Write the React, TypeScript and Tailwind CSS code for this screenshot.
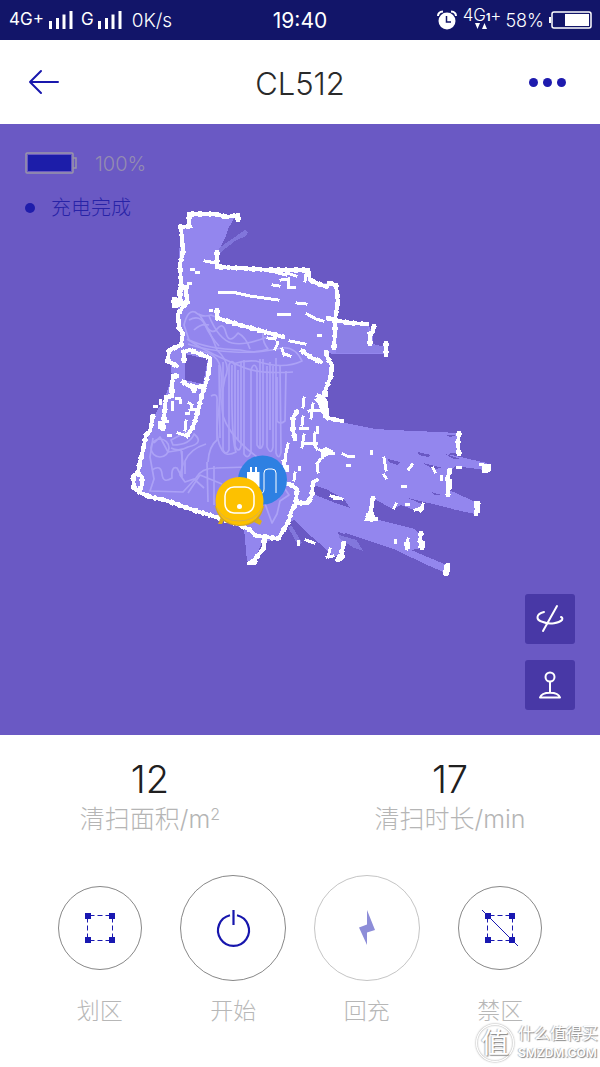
import type { ReactNode } from "react";

const walls = [
  // upper room
  "M238 220V215L227 217L215 214H189V224L190 226L181 227L183 252L180 264L181 286L179 302",
  "M187 287L180 289V300L174 299V306L183 304L187 302L186 289",
  "M185 304L178 314L179 328L183 333L181 345L169 350L168 361L177 366",
  "M217 252V267L240 268L270 270L308 270L310 280L319 284L327 287",
  "M217 310V318L240 325L262 331L283 337",
  "M329 283L336 285L338 302L335 320L335 332L334 348",
  "M328 318L340 321L350 323L367 324",
  "M374 326L373 332L370 334L370 344",
  "M386 343V355",
  "M302 351L312 358L321 362",
  // right side
  "M326 352L328 359L332 365L331 376L325 391L325 395L317 400L323 406L326 409L328 418L342 421",
  "M318 396L326 402L325 416",
  "M297 411L293 418L293 430L295 439",
  "M284 483L290 484L297 489L296 503L308 503L312 495L313 482L317 480",
  // lower outline
  "M177 376L173 376L172 385V396L166 397L165 408L164 418L163 429",
  "M153 416L150 431L146 435L143 450L139 466L138 473L133 476L134 488L139 492L150 497L165 500L190 509L216 517L240 525L250 530L256 536L267 537L278 539L283 531L289 521L291 512L296 503",
  "M137 473L142 477V485L139 491",
  "M264 540L264 548L259 554L254 561",
  // pillar
  "M184 361V352L190 350L197 353L210 358L209 370L206 383L202 394L198 411L193 427L187 436",
  "M183 382L189 386L204 387M194 388V391",
  // far right ends
  "M459 433L458 443L459 454",
  "M450 470L447 480L449 484L448 495",
  "M478 503L476 514",
  "M448 565L446 574",
  "M421 533L420 541L422 548",
  "M373 498L371 510L367 519L376 519",
  "M344 543L342 551L343 557L337 560",
];

const debris = [
  "M205 261L216 263M219 292L232 292L250 296L278 300M307 314L316 319L323 321M290 341L305 344",
  "M309 411L320 410L325 414M320 450L328 453L333 453M322 457V452",
  "M275 272L286 275L289 271M281 280L288 279L288 287M273 285L279 286M290 274L296 276M289 287H294M306 274L305 281",
  "M297 303L306 304M278 314L289 314M318 335H320",
  "M191 269H193M196 272H198M188 283H190",
  "M210 310H211M268 338L275 339M275 349L277 345V342M282 349L284 355M285 354L290 356",
  "M160 400V403M154 406H156M159 422V427M170 388V390M172 402V409M180 400V402M176 398H179",
  "M189 403L192 405L191 409M190 410L197 409M186 413H188M186 421L185 430M178 433L184 435M166 421H167M168 435H170",
  "M304 398L303 407M303 417L302 425M300 428L307 428M317 427L317 432M315 433L314 444L317 449M304 435L302 447M304 443H316M313 404L311 418",
  "M288 444L286 453L285 462M283 461L285 468M286 483L291 486M295 473L294 480M320 460L317 464L318 472M299 467V469",
  "M343 454L347 456L353 456M371 451V453M347 465H349",
  "M331 496L342 499M334 498H340M384 458L386 470M384 475L386 478M402 486H405M409 469L412 465",
  "M433 468L435 472M441 476V479M457 467H460M480 464H482",
  "M396 504L394 508M406 504H408M415 510L422 508L423 504M395 540V542M408 539L407 549",
  "M298 541V544M306 540L314 543M330 549L328 557M327 557L333 556",
];

const track = [
  "M184 325Q188 309 195 312Q202 318 211 315Q224 321 244 326T263 332Q262 342 268 349Q256 354 240 350Q208 349 189 340Z",
  "M189 320Q200 314 205 325T219 346M187 339Q200 348 215 355T245 368T293 372",
  "M199 314Q210 330 217 350Q232 364 225 378Q220 398 223 416Q228 432 247 449L257 457",
  "M204 323Q212 336 217 329Q223 321 226 333T238 333Q246 337 250 349",
  "M188 344C213 353 254 355 281 348Q295 346 302 361Q283 370 256 361Q244 360 233 364",
  "M194 330Q201 323 209 325M209 316Q219 340 232 343T267 337",
  "M194 351Q220 351 221 372C224 398 211 430 221 448Q225 458 236 452Q231 440 232 365",
  "M211 396Q218 392 217 402V440Q209 446 208 462",
  "M223 362V450Q226 456 229 450V365Q232 358 235 365V446Q239 454 241 446V362",
  "M244 360V454Q248 460 251 452V370Q254 361 257 369V445Q261 452 263 444V359",
  "M267 366V447Q271 456 273 447V366M276 358V453Q279 461 281 452L280 365",
  "M286 371L285 421Q280 425 277 421V377M219 365L220 438M238 370V440M260 359V449M270 362V430",
  "M153 438L150 457L154 479L150 491L183 492L196 478Q201 468 216 468L248 467",
  "M154 443L160 437L168 452L181 450L183 464L180 475L185 482L194 479L204 488",
  "M152 470Q161 464 162 474T172 478Q171 466 177 468L182 477V451",
  "M171 448Q179 452 188 447Q205 443 194 434Q190 445 173 445L171 440L190 430",
  "M151 448a9 9 0 1 0 18 0a9 9 0 0 0-18 0",
  "M188 493L200 475L222 484M207 462L208 502M214 466V505M206 444Q190 449 185 461V474",
  "M264 501L272 523L277 514L280 501L289 495L285 489L276 493L268 491",
];

function SignalBars() {
  return (
    <svg viewBox="0 0 24 18" className="h-[18px] w-6" fill="white" aria-hidden="true">
      <path d="M0 10h3v8H0zM7 7h3v11H7zM13.500 3.500h3V18h-3zM20.500 0h3v18h-3z" />
    </svg>
  );
}

function StatusBar() {
  return (
    <div className="relative flex h-10 items-center justify-between bg-[#121569] pl-[9px] pr-2 text-white">
      <div className="flex items-center">
        <span className="w-10 text-[17px]">4G+</span>
        <SignalBars />
        <span className="ml-2 mr-1 text-[17px]">G</span>
        <SignalBars />
        <span className="ml-2.5 pt-0.5 text-[19px] font-light">0K/s</span>
      </div>
      <span className="absolute left-1/2 -translate-x-1/2 pt-0.5 text-[21px]">19:40</span>
      <div className="flex items-center">
        <svg viewBox="0 0 20 20" className="mr-1.5 size-5" aria-hidden="true">
          <circle cx="10" cy="11" r="8.500" fill="white" />
          <path d="M1 6Q1 2 6 1.500M14 1.500Q19 2 19 6" fill="none" stroke="white" strokeWidth="2" />
          <path d="M9.500 6v6H14" fill="none" stroke="#121569" strokeWidth="1.500" />
        </svg>
        <span className="relative -top-1 mr-1 flex items-start text-[17px] font-light">
          4G<span className="pt-2 text-[10px] font-bold leading-3">1</span>+
          <svg viewBox="0 0 12 6" className="absolute left-3 top-5 h-1.5 w-3" fill="white" aria-hidden="true">
            <path d="M0 0h5L2.500 6zM7 6h5L9.500 0z" />
          </svg>
        </span>
        <span className="pt-0.5 text-lg font-light">58%</span>
        <svg viewBox="0 0 44 18" className="ml-1 h-[18px] w-11" aria-hidden="true">
          <rect x="4" y="1" width="39" height="16" rx="2" fill="none" stroke="white" strokeWidth="1.500" />
          <path d="M1 6h2v6H1z" fill="white" />
          <path d="M17 3h24v12H17z" fill="white" />
        </svg>
      </div>
    </div>
  );
}

function CleaningMap() {
  return (
    <svg viewBox="0 124 600 611" className="block w-full" role="img" aria-label="清扫地图">
      <g shapeRendering="crispEdges">
        <path
          fill="#9386ee"
          d="M189 215H236L228 229L226 236L220 248L217 266L308 270L310 281L337 285V323L368 325L373 333V344L386 347V354H335L327 353L332 368L325 393L328 419L350 424L376 429L391 430L416 431L458 433L459 452L447 454L487 463L485 470L455 466L450 471L449 490L478 503L475 514L452 509L449 508L408 498L424 505L420 512L401 505L393 509L374 499L371 518L415 529L420 535L422 548L411 550L449 566L446 573L427 565L396 550L363 539L345 533L343 557L333 556L319 543L304 530L295 520L288 522L278 539L262 542L254 562L247 561L244 529L216 518L142 494L133 485L140 466L153 418L165 397L172 377L169 350L181 345L178 315L180 227L190 225Z"
        />
        <path d="M219 248L245 230L248 232L246 236L235 241L221 252L217 257Z" fill="#8176db" />
        <path d="M340 533L356 539L363 551L354 548L339 538M292 526L302 543L298 545L288 527" fill="#8277dc" />
        <path d="M338 325H367L372 344L384 347V353H336Z" fill="#8b7fe5" />
        <path
          fill="#6a59c4"
          d="M185 354L208 359L203 384L185 380ZM313 485L326 489L344 499L350 508L333 502L313 494ZM338 532L353 537L374 545L339 535ZM418 452L431 455L428 457L419 455ZM443 453L460 459L454 459ZM388 459L400 462L397 465L389 462ZM423 463L443 468L433 469ZM431 492L442 495L435 495ZM446 435H456L450 437Z"
        />
      </g>
      <g fill="none" stroke="#aca2f6" strokeWidth="1.700" strokeLinejoin="round">
        {track.map((d) => (
          <path key={d} d={d} />
        ))}
      </g>
      <g fill="none" stroke="white" strokeLinecap="square" shapeRendering="crispEdges">
        {walls.map((d) => (
          <path key={d} d={d} strokeWidth="3.800" />
        ))}
        {/* ragged scan edge along the walls */}
        {walls.map((d) => (
          <path key={d} d={d} strokeWidth="5.400" strokeLinecap="butt" strokeDasharray="3 5 2 7 4 4" />
        ))}
        {debris.map((d) => (
          <path key={d} d={d} strokeWidth="3" />
        ))}
      </g>
      <path
        d="M160 422l4-3 2 10-6 1zM320 450l6-3 8 4-7 5-5 3zM247 562l7-4 4 3-2 4h-9zM284 465h5v7h-4zM317 400l3-6 6 4v12h-6zM482 464h9v7l-4 2h-5zM416 509l6-4 2 4-4 4zM444 565h6v6l-4 4h-3zM474 501h6v12l-5 1zM446 479h6v10h-6zM404 542h6v7h-5zM420 541h5v7h-7zM369 514l4-4 3 10-9-1zM337 555l6-3v8h-5z"
        fill="white"
        shapeRendering="crispEdges"
      />

      {/* charging dock */}
      <circle cx="262.500" cy="480" r="24.500" fill="#2e80e2" />
      <path d="M247 472h3v-5h2v5h3v-5h2v5h2.500v15H247z" fill="white" />
      <path d="M259 494q5 0 5-5v-16q0-4 4-4h4q4 0 4 4v20" fill="none" stroke="white" />

      {/* robot */}
      <path d="M221 517l3 3-2 4h-4zM257 517l5 4-2 4-6-3z" fill="#dfaf14" />
      <path d="M216 506q4 18 23 19 20 0 24-19" fill="none" stroke="#d3a522" strokeWidth="2" />
      <circle cx="239.500" cy="501" r="24" fill="#fdc100" />
      <path d="M217 508q6 13 22 13t23-13" fill="none" stroke="#d9b04a" />
      <rect x="225" y="487" width="29" height="26" rx="9" fill="none" stroke="white" strokeWidth="1.500" />
      <circle cx="239.500" cy="506.500" r="2.500" fill="white" />
    </svg>
  );
}

function MapPanel() {
  return (
    <section className="relative bg-[#6a59c4]">
      <CleaningMap />

      <div className="absolute left-[25px] top-[26px]">
        <div className="flex items-center gap-[18px]">
          <svg viewBox="0 0 52 22" className="h-[22px] w-[52px]" aria-hidden="true">
            <rect x="1" y="1" width="47" height="20" rx="1" fill="none" stroke="#9995a8" strokeWidth="1.500" />
            <path d="M48 6h3v10h-3" fill="none" stroke="#9995a8" strokeWidth="1.500" />
            <rect x="3" y="3" width="43" height="16" fill="#1c1da9" />
          </svg>
          <span className="pt-0.5 text-xl font-light leading-6 text-[#948cb1]">100%</span>
        </div>
        <p className="mt-5 flex items-center gap-4 text-xl font-light leading-6 text-[#2823a7]">
          <span className="size-2.5 rounded-full bg-[#1f1dab]" />
          充电完成
        </p>
      </div>

      <div className="absolute bottom-[25px] right-[25px] flex flex-col gap-4">
        <button type="button" aria-label="旋转地图" className="rounded-[3px] bg-[#4838a6]">
          <svg viewBox="0 0 50 50" className="size-[50px]" fill="none" stroke="white" strokeWidth="2" strokeLinecap="round">
            <path d="M32 12L18 37" />
            <path d="M19 18C11 20 10 26 18 28C25 31 34 29 37 26Q38 24 36 23" />
          </svg>
        </button>
        <button type="button" aria-label="遥控" className="rounded-[3px] bg-[#4838a6]">
          <svg viewBox="0 0 50 50" className="size-[50px]" fill="none" stroke="white" strokeWidth="2" strokeLinejoin="round">
            <circle cx="25" cy="17" r="4.500" />
            <path d="M25 21.500V32M15 37.500C17 31 33 31 35 37.500Z" />
          </svg>
        </button>
      </div>
    </section>
  );
}

function Stat({ value, label }: { value: string; label: ReactNode }) {
  return (
    <div className="text-center">
      <p className="text-[38px] font-light leading-10 text-[#202020]">{value}</p>
      <p className="text-[25px] font-light leading-10 text-[#b5b5b5]">{label}</p>
    </div>
  );
}

function ZoneIcon({ crossed = false }: { crossed?: boolean }) {
  return (
    <svg viewBox="0 0 36 36" className="size-9" fill="none" stroke="#1918b1" aria-hidden="true">
      <path d="M5.500 5.500h25M5.500 30.500h25M5.500 5.500v25M30.500 5.500v25" strokeDasharray="5 3" strokeDashoffset="-2" />
      <path d="M3 3h6v6H3zM27 3h6v6h-6zM3 27h6v6H3zM27 27h6v6h-6z" fill="#1918b1" stroke="none" />
      {crossed && <path d="M0 0L36 36" />}
    </svg>
  );
}

function PowerIcon() {
  return (
    <svg viewBox="0 0 40 40" className="size-10" fill="none" stroke="#1716ad" strokeWidth="2.200" aria-hidden="true">
      <path d="M20.500 2V17M17 7.300A15.500 15.500 0 1 0 24 7.300" />
    </svg>
  );
}

function BoltIcon() {
  return (
    <svg viewBox="0 0 40 40" className="size-10" fill="#8d8dd8" aria-hidden="true">
      <path d="M20 2L28 22L20 24.500V37L12 19.500L20 16.500Z" />
    </svg>
  );
}

function Action({ label, ring, children }: { label: string; ring: string; children: ReactNode }) {
  return (
    <button type="button" className="flex flex-col items-center">
      <span className="flex h-[106px] items-center">
        <span className={`flex items-center justify-center rounded-full border ${ring}`}>{children}</span>
      </span>
      <span className="mt-3 text-[23px] font-light leading-9 text-[#b7b7b7]">{label}</span>
    </button>
  );
}

function Watermark() {
  return (
    <div className="absolute bottom-1 right-1 flex items-center gap-1 text-white [text-shadow:1px_1px_1px_#888,-1px_0_1px_#bbb]">
      <span className="flex size-[38px] items-center justify-center rounded-full border border-white text-[28px] leading-none shadow-[0_0_2px_#888,inset_0_0_2px_#888]">
        值
      </span>
      <span className="w-[78px] whitespace-nowrap">
        <span className="block text-base leading-5">什么值得买</span>
        <span className="block text-xs font-semibold leading-5">SMZDM.COM</span>
      </span>
    </div>
  );
}

export default function App() {
  return (
    <main className="relative min-h-screen bg-white font-[Inter,'Noto_Sans_CJK_SC',sans-serif]">
      <StatusBar />
      <header className="grid h-[84px] grid-cols-3 items-center px-7">
        <button type="button" aria-label="返回" className="justify-self-start">
          <svg viewBox="0 0 32 26" className="h-[26px] w-8" fill="none" stroke="#1918ad" strokeWidth="2" strokeLinecap="round" strokeLinejoin="round">
            <path d="M13 2L2 13L13 24M2 13H30" />
          </svg>
        </button>
        <h1 className="pt-1 text-center text-[31px] font-light leading-10 text-[#2a2a2a]">CL512</h1>
        <button type="button" aria-label="更多" className="flex gap-[5px] justify-self-end pr-1.5">
          <span className="size-[9px] rounded-full bg-[#1e1bae]" />
          <span className="size-[9px] rounded-full bg-[#1e1bae]" />
          <span className="size-[9px] rounded-full bg-[#1e1bae]" />
        </button>
      </header>

      <MapPanel />

      <section className="grid grid-cols-2 pt-6">
        <Stat
          value="12"
          label={
            <>
              清扫面积/m<sup className="text-base">2</sup>
            </>
          }
        />
        <Stat value="17" label="清扫时长/min" />
      </section>

      <section className="grid grid-cols-4 px-[33px] pt-9">
        <Action label="划区" ring="size-[84px] border-[#888]">
          <ZoneIcon />
        </Action>
        <Action label="开始" ring="size-[106px] border-[#888]">
          <PowerIcon />
        </Action>
        <Action label="回充" ring="size-[106px] border-[#c5c5c5]">
          <BoltIcon />
        </Action>
        <Action label="禁区" ring="size-[84px] border-[#888]">
          <ZoneIcon crossed />
        </Action>
      </section>

      <Watermark />
    </main>
  );
}
